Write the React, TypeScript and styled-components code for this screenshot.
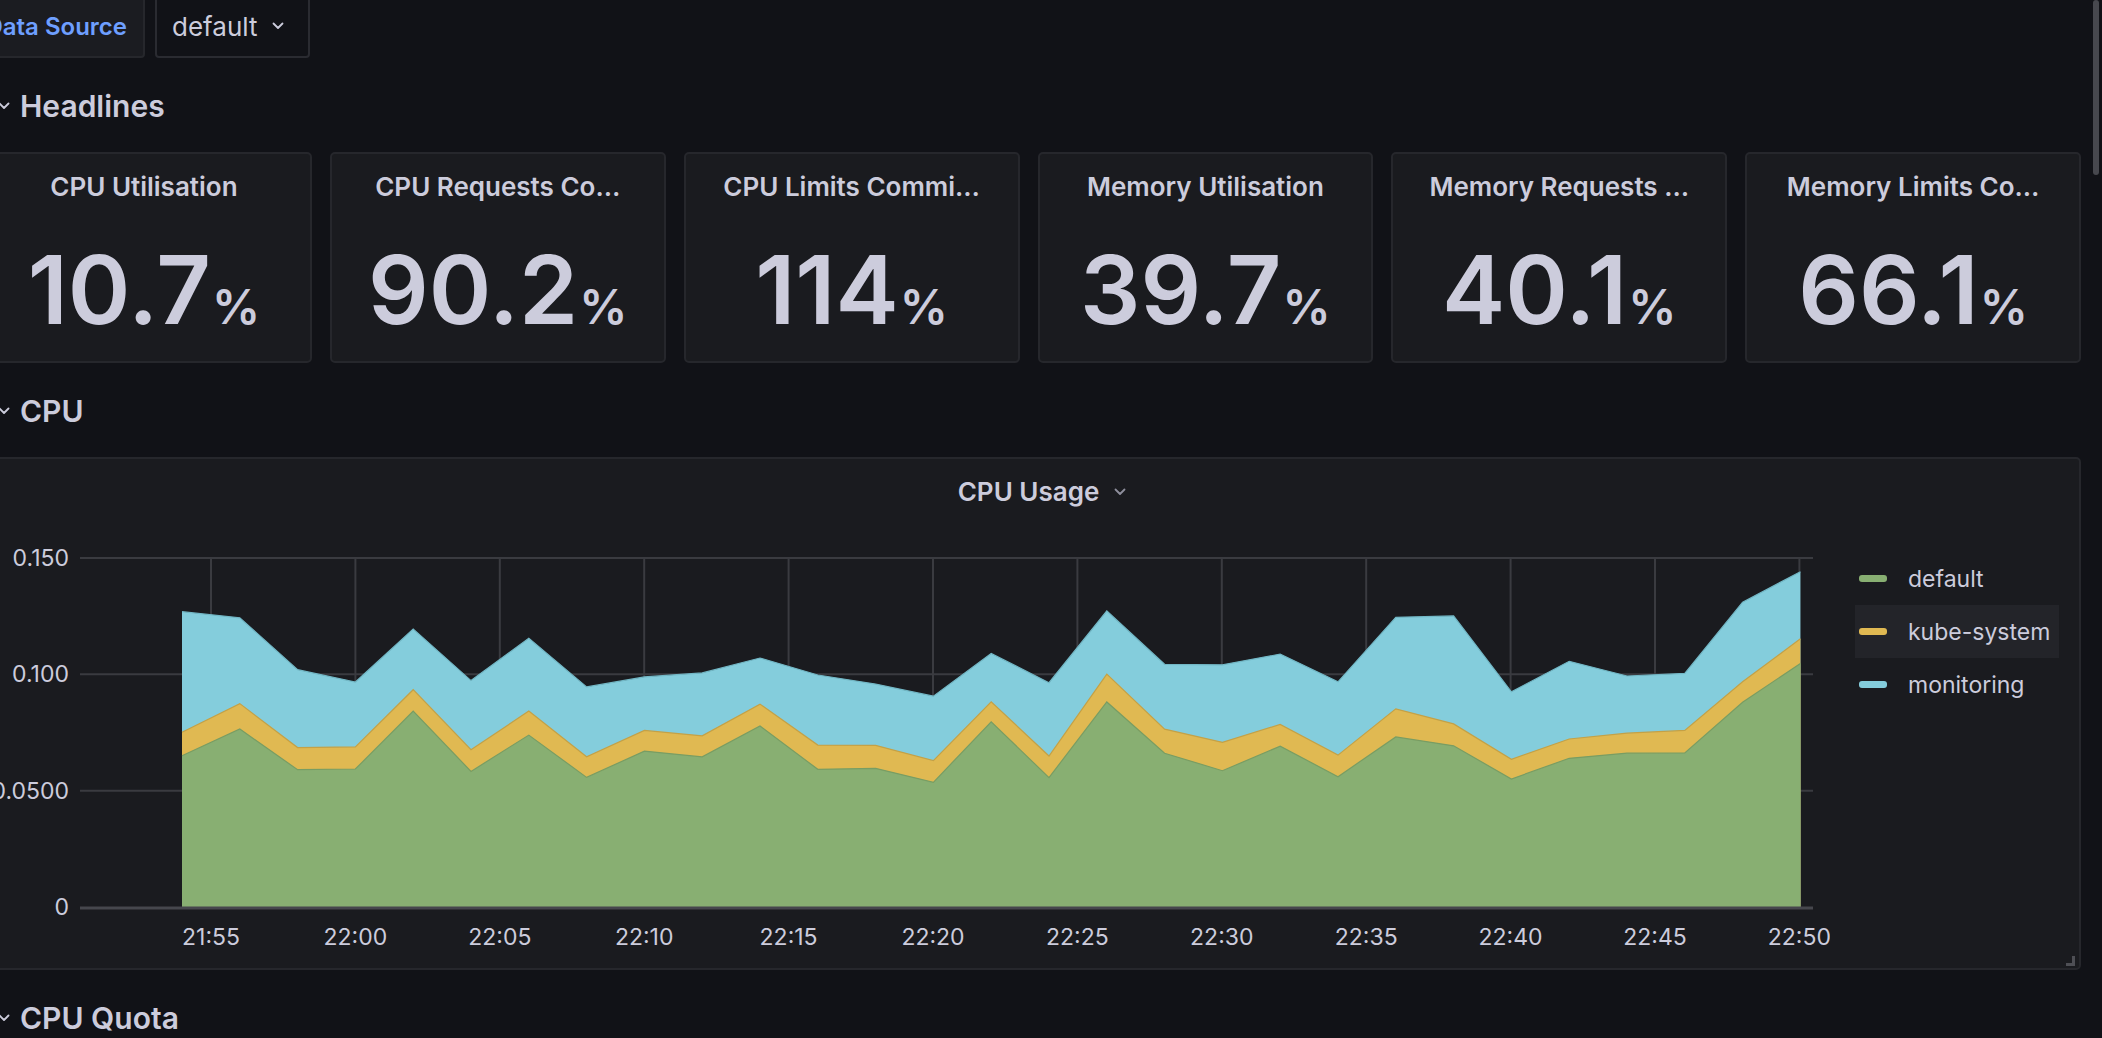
import React from 'react';
import styled, { createGlobalStyle } from 'styled-components';

const GlobalStyle = createGlobalStyle`
  html, body {
    margin: 0;
    padding: 0;
    background: #111217;
    overflow: hidden;
  }
  body {
    font-family: Inter, 'Noto Sans', sans-serif;
    color: #ccccdc;
  }
`;

const Page = styled.div`
  position: relative;
  width: 2102px;
  height: 1038px;
  overflow: hidden;
`;

const Scrollbar = styled.div`
  position: absolute;
  top: 0;
  right: 3px;
  width: 6px;
  height: 175px;
  border-radius: 3px;
  background: #47484e;
`;

const Dashboard = styled.div`
  width: 2105px;
  margin: -6px 0 0 -24px;
`;

const VarBar = styled.div`
  display: flex;
  gap: 10px;
  height: 64px;
`;

const VarLabel = styled.label`
  display: flex;
  align-items: center;
  justify-content: flex-end;
  box-sizing: border-box;
  width: 169px;
  padding-right: 16px;
  background: #1b1c21;
  border: 2px solid #26272c;
  border-radius: 4px;
  color: #6e9fff;
  font-size: 24px;
  font-weight: 600;
`;

const VarSelect = styled.div`
  display: flex;
  align-items: center;
  justify-content: space-between;
  box-sizing: border-box;
  width: 155px;
  padding: 0 24px 0 15px;
  border: 2px solid #2a2b31;
  border-radius: 4px;
  font-size: 26px;
  color: #ccccdc;
`;

const ChevronSvg = styled.svg<{ $dim?: boolean }>`
  flex: none;
  color: ${(p) => (p.$dim ? '#8e8e9c' : '#ccccdc')};
`;

const Chevron: React.FC<{ dim?: boolean; className?: string }> = ({ dim, className }) => (
  <ChevronSvg $dim={dim} className={className} width="12" height="8" viewBox="0 0 12 8">
    <path
      d="M1.5 1.5 L6 6 L10.5 1.5"
      stroke="currentColor"
      strokeWidth="1.8"
      fill="none"
      strokeLinecap="round"
      strokeLinejoin="round"
    />
  </ChevronSvg>
);

const RowHeader = styled.div`
  display: flex;
  align-items: center;
  gap: 10px;
  height: 64px;
  margin: 16px 0 14px;
  padding-left: 22px;
  font-size: 30px;
  font-weight: 600;
  color: #ccccdc;
`;

const StatGrid = styled.div`
  display: grid;
  grid-template-columns: repeat(6, 1fr);
  gap: 18px;
`;

const Panel = styled.div`
  box-sizing: border-box;
  background: #1a1b1f;
  border: 2px solid #26272c;
  border-radius: 5px;
`;

const StatPanel = styled(Panel)`
  height: 211px;
  display: flex;
  flex-direction: column;
  min-width: 0;
`;

const PanelHeader = styled.div`
  flex: none;
  height: 64px;
  display: flex;
  align-items: center;
  justify-content: center;
  font-size: 26px;
  font-weight: 600;
  color: #ccccdc;
  white-space: nowrap;
`;

const StatBody = styled.div`
  flex: 1;
  display: flex;
  align-items: center;
  justify-content: center;
`;

const StatValue = styled.div`
  font-size: 95px;
  font-weight: 600;
  line-height: 1;
  color: #ccccdc;
`;

const Unit = styled.span`
  font-size: 48px;
  margin-left: 1px;
`;

const GraphPanel = styled(Panel)`
  position: relative;
  height: 513px;
  display: flex;
  flex-direction: column;
`;

const GraphTitle = styled.span`
  position: relative;
`;

const TitleChevron = styled(Chevron)`
  position: absolute;
  left: calc(100% + 15px);
  top: 50%;
  margin-top: -3px;
`;

const GraphBody = styled.div`
  flex: 1;
  display: flex;
  align-items: flex-start;
`;

const ChartSvg = styled.svg`
  flex: none;
  display: block;
`;

const Legend = styled.ul`
  list-style: none;
  margin: 29px 0 0 25px;
  padding: 0;
  display: flex;
  flex-direction: column;
  align-items: flex-start;
`;

const LegendItem = styled.li<{ $active?: boolean }>`
  display: flex;
  align-items: center;
  gap: 21px;
  height: 53px;
  padding: 0 9px 0 4px;
  background: ${(p) => (p.$active ? '#232429' : 'transparent')};
  font-size: 23px;
  color: #ccccdc;
`;

const Swatch = styled.span<{ $color: string }>`
  width: 28px;
  height: 7px;
  border-radius: 3px;
  background: ${(p) => p.$color};
`;

const ResizeHandle = styled.div`
  position: absolute;
  right: 4px;
  bottom: 2px;
  width: 6px;
  height: 7px;
  border-right: 3px solid #4e4f55;
  border-bottom: 3px solid #4e4f55;
`;

const stats = [
  { title: 'CPU Utilisation', value: '10.7' },
  { title: 'CPU Requests Co…', value: '90.2' },
  { title: 'CPU Limits Commi…', value: '114' },
  { title: 'Memory Utilisation', value: '39.7' },
  { title: 'Memory Requests …', value: '40.1' },
  { title: 'Memory Limits Co…', value: '66.1' },
];

const seriesDefault = [
  0.065, 0.0765, 0.059, 0.0593, 0.0842, 0.0583, 0.0739, 0.0557, 0.067, 0.0645, 0.0778, 0.0592,
  0.0596, 0.0536, 0.0796, 0.0556, 0.0881, 0.0661, 0.0586, 0.0691, 0.056, 0.0731, 0.0693, 0.055,
  0.0639, 0.0661, 0.0662, 0.088, 0.1047,
];
const seriesKube = [
  0.0101, 0.0109, 0.0095, 0.0095, 0.0092, 0.0093, 0.0103, 0.0089, 0.0089, 0.0091, 0.0094, 0.0104,
  0.0099, 0.0093, 0.0086, 0.0093, 0.012, 0.0103, 0.0122, 0.0094, 0.0093, 0.0121, 0.0094, 0.0085,
  0.0083, 0.0086, 0.0097, 0.0088, 0.0106,
];
const seriesMonitoring = [
  0.0518, 0.0369, 0.0335, 0.0279, 0.0261, 0.0297, 0.0313, 0.03, 0.023, 0.027, 0.0198, 0.0301,
  0.0263, 0.0277, 0.0208, 0.0315, 0.0271, 0.0279, 0.0333, 0.0302, 0.0315, 0.0393, 0.0464, 0.029,
  0.0334, 0.0246, 0.0245, 0.0342, 0.0288,
];

const legend = [
  { name: 'default', color: '#88af72' },
  { name: 'kube-system', color: '#e0b952', active: true },
  { name: 'monitoring', color: '#84cddc' },
];

// chart geometry (svg coords)
const W = 1852;
const H = 445;
const PLOT = { left: 102, right: 1835, top: 35, bottom: 384 };
const Y_MAX = 0.15;
const yOf = (v: number) => PLOT.bottom - (v / Y_MAX) * (PLOT.bottom - PLOT.top);
const xOf = (i: number) => 204 + i * 57.8;
const tickX = (k: number) => 233 + k * 144.4;

const yTicks = [
  { v: 0.15, label: '0.150' },
  { v: 0.1, label: '0.100' },
  { v: 0.05, label: '0.0500' },
  { v: 0, label: '0' },
];
const xTicks = ['21:55', '22:00', '22:05', '22:10', '22:15', '22:20', '22:25', '22:30', '22:35', '22:40', '22:45', '22:50'];

const stackTops = () => {
  const d = seriesDefault;
  const k = d.map((v, i) => v + seriesKube[i]);
  const m = k.map((v, i) => v + seriesMonitoring[i]);
  return { d, k, m };
};

const areaPath = (tops: number[]) => {
  const last = tops.length - 1;
  const pts = tops.map((v, i) => `L${xOf(i).toFixed(1)},${yOf(v).toFixed(1)}`).join(' ');
  return `M${xOf(0)},${PLOT.bottom} ${pts} L${xOf(last).toFixed(1)},${PLOT.bottom} Z`;
};

const linePath = (tops: number[]) =>
  tops.map((v, i) => `${i === 0 ? 'M' : 'L'}${xOf(i).toFixed(1)},${yOf(v).toFixed(1)}`).join(' ');

const CpuChart: React.FC = () => {
  const { d, k, m } = stackTops();
  const layers = [
    { tops: m, fill: '#84cddc', stroke: '#72b7c5' },
    { tops: k, fill: '#e0b952', stroke: '#c4a146' },
    { tops: d, fill: '#88af72', stroke: '#789d63' },
  ];
  return (
    <ChartSvg width={W} height={H} viewBox={`0 0 ${W} ${H}`}>
      {yTicks.slice(0, 3).map((t) => (
        <line key={t.label} x1={PLOT.left} x2={PLOT.right} y1={yOf(t.v)} y2={yOf(t.v)} stroke="#3a3b40" strokeWidth="2" />
      ))}
      {xTicks.map((t, i) => (
        <line key={t} x1={tickX(i)} x2={tickX(i)} y1={PLOT.top} y2={PLOT.bottom} stroke="#3a3b40" strokeWidth="2" />
      ))}
      {layers.map((l, i) => (
        <g key={i}>
          <path d={areaPath(l.tops)} fill={l.fill} />
          <path d={linePath(l.tops)} fill="none" stroke={l.stroke} strokeWidth="1.2" />
        </g>
      ))}
      <line x1={PLOT.left} x2={PLOT.right} y1={PLOT.bottom + 1} y2={PLOT.bottom + 1} stroke="#46474d" strokeWidth="3" />
      <g fontFamily="Inter, 'Noto Sans', sans-serif" fontSize="23" fill="#ccccdc">
        {yTicks.map((t) => (
          <text key={t.label} x={91} y={yOf(t.v)} textAnchor="end" dominantBaseline="central">
            {t.label}
          </text>
        ))}
        {xTicks.map((t, i) => (
          <text key={t} x={tickX(i)} y={414} textAnchor="middle" dominantBaseline="central">
            {t}
          </text>
        ))}
      </g>
    </ChartSvg>
  );
};

const App: React.FC = () => {
  return (
    <Page>
      <GlobalStyle />
      <Dashboard>
        <VarBar>
          <VarLabel>Data Source</VarLabel>
          <VarSelect>
            <span>default</span>
            <Chevron />
          </VarSelect>
        </VarBar>

        <RowHeader>
          <Chevron />
          Headlines
        </RowHeader>
        <StatGrid>
          {stats.map((s) => (
            <StatPanel key={s.title}>
              <PanelHeader>{s.title}</PanelHeader>
              <StatBody>
                <StatValue>
                  {s.value}
                  <Unit>%</Unit>
                </StatValue>
              </StatBody>
            </StatPanel>
          ))}
        </StatGrid>

        <RowHeader>
          <Chevron />
          CPU
        </RowHeader>
        <GraphPanel>
          <PanelHeader>
            <GraphTitle>
              CPU Usage
              <TitleChevron dim />
            </GraphTitle>
          </PanelHeader>
          <GraphBody>
            <CpuChart />
            <Legend>
              {legend.map((l) => (
                <LegendItem key={l.name} $active={l.active}>
                  <Swatch $color={l.color} />
                  {l.name}
                </LegendItem>
              ))}
            </Legend>
          </GraphBody>
          <ResizeHandle />
        </GraphPanel>

        <RowHeader>
          <Chevron />
          CPU Quota
        </RowHeader>
      </Dashboard>
      <Scrollbar />
    </Page>
  );
};

export default App;
